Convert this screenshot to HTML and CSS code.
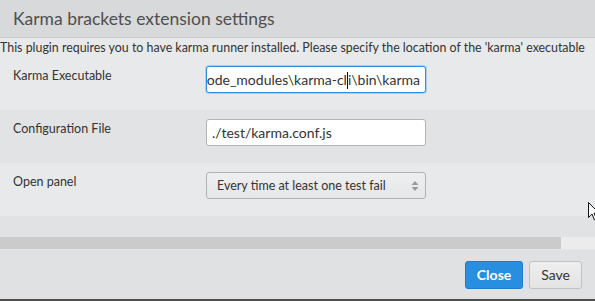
FILE: index.html
```html
<!DOCTYPE html>
<html lang="en">
<head>
    <meta charset="UTF-8">
    <title>Karma brackets extension settings</title>
    <link rel="stylesheet" href="styles.css">
</head>
<body>
    <div class="dialog">
        <div class="dialog-header">
            <h1>Karma brackets extension settings</h1>
        </div>
        <div class="dialog-body">
            <p class="desc">This plugin requires you to have karma runner installed. Please specify the location of the 'karma' executable</p>
            <div class="row">
                <label>Karma Executable</label>
                <div class="field focused">
                    <span>node_modules\karma-cl<i class="caret"></i>i\bin\karma</span>
                </div>
            </div>
            <div class="row alt">
                <label>Configuration File</label>
                <div class="field start">
                    <span>./test/karma.conf.js</span>
                </div>
            </div>
            <div class="row">
                <label>Open panel</label>
                <div class="select">
                    <span>Every time at least one test fail</span>
                    <svg width="8" height="12" viewBox="0 0 8 12">
                        <path d="M4 1 L7.5 5 L0.5 5 Z" fill="#9a9a9a"/>
                        <path d="M4 11 L7.5 7 L0.5 7 Z" fill="#9a9a9a"/>
                    </svg>
                </div>
            </div>
            <div class="spacer"></div>
        </div>
        <div class="scrollbar">
            <div class="thumb"></div>
        </div>
        <div class="dialog-footer">
            <button class="btn primary">Close</button>
            <button class="btn">Save</button>
        </div>
    </div>

    <svg class="pointer" width="12" height="19" viewBox="0 0 12 19">
        <path d="M0.5 0.5 L0.5 15.5 L4 12 L6.5 18 L8.5 17 L6 11.2 L11 11.2 Z" fill="#fff" stroke="#111" stroke-width="1"/>
    </svg>
</body>
</html>
```

FILE: styles.css
```css
body {
    margin: 0;
    font-family: Lato, "Open Sans", sans-serif;
    color: #333;
    background: #e8e9eb;
}

.dialog {
    width: 595px;
    height: 301px;
    overflow: hidden;
    display: flex;
    flex-direction: column;
    border-bottom: 2px solid #505050;
    box-sizing: border-box;
}

.dialog-header {
    height: 37px;
    background-color: #d8d9db;
    border-bottom: 1px solid #c8c9cb;
    display: flex;
    align-items: center;
    padding-left: 13px;
}

.dialog-header h1 {
    margin: 0;
    font-size: 17.5px;
    font-weight: normal;
    color: #4f4f4f;
}

.dialog-body {
    background-color: #e8e9eb;
}

.desc {
    margin: 0;
    height: 19px;
    line-height: 19px;
    font-size: 12.4px;
    white-space: nowrap;
}

.row {
    display: flex;
    align-items: flex-start;
    padding: 9px 0 17px 13px;
    height: 27px;
}

.row.alt {
    background-color: #e2e3e5;
}

.row label {
    width: 193px;
    font-size: 12.5px;
    padding-top: 2px;
}

.field {
    width: 220px;
    height: 27px;
    box-sizing: border-box;
    border: 1px solid #b4b4b4;
    border-radius: 3px;
    background: #fff;
    display: flex;
    align-items: center;
    justify-content: flex-end;
    overflow: hidden;
    padding: 0 5px;
    font-size: 14px;
    white-space: nowrap;
}

.field.start {
    justify-content: flex-start;
}

.field.focused {
    border-color: #2e8fe6;
    box-shadow: 0 0 0 1px #a8cff3;
}

.caret {
    display: inline-block;
    width: 1px;
    height: 17px;
    background: #111;
    vertical-align: -4px;
}

.select {
    width: 220px;
    height: 27px;
    box-sizing: border-box;
    border: 1px solid #b2b2b2;
    border-radius: 3px;
    background: linear-gradient(#eeeff0, #e5e6e8);
    display: flex;
    align-items: center;
    justify-content: space-between;
    padding: 0 6px 0 10px;
    font-size: 12.5px;
}

.spacer {
    height: 21px;
    background-color: #e1e2e4;
}

.scrollbar {
    height: 12px;
    background-color: #ececec;
    border-bottom: 1px solid #e6e6e6;
}

.thumb {
    width: 561px;
    height: 12px;
    background-color: #cbcbcb;
}

.dialog-footer {
    flex: 1;
    background-color: #e0e1e3;
    display: flex;
    justify-content: flex-end;
    align-items: center;
    gap: 6px;
    padding: 0 13px 0 0;
}

.btn {
    height: 28px;
    padding: 0 11px;
    font-family: inherit;
    font-size: 14px;
    color: #333;
    border: 1px solid #c2c2c2;
    border-radius: 3px;
    background: linear-gradient(#eeeeee, #e4e4e4);
}

.btn.primary {
    background: #288edf;
    border-color: #1f7bcc;
    color: #fff;
    font-weight: bold;
}

.pointer {
    position: absolute;
    left: 588px;
    top: 202px;
}
```
